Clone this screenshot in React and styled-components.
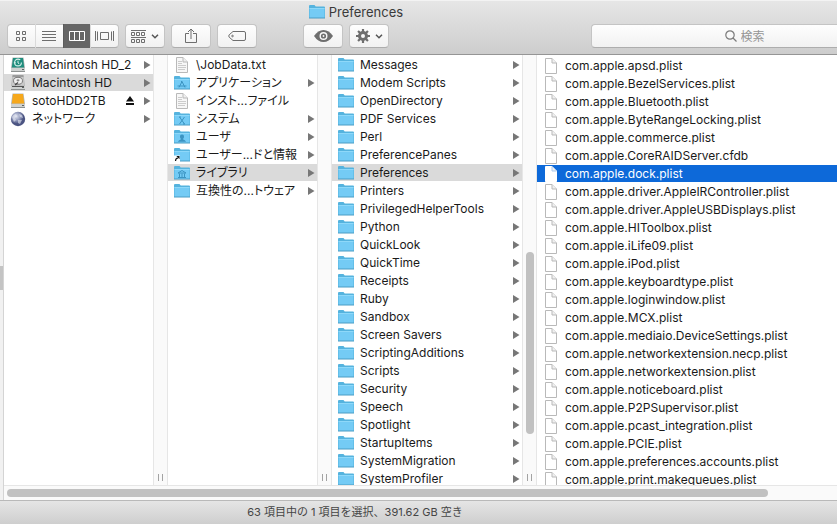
import React, { useState } from "react";
import styled, { createGlobalStyle, css } from "styled-components";

const GlobalStyle = createGlobalStyle`
  *, *::before, *::after { box-sizing: border-box; }
  html, body { margin: 0; }
  body, button, input {
    font-family: Inter, "Noto Sans CJK JP", sans-serif;
    font-size: 12px;
    color: #1a1a1a;
  }
  button { margin: 0; padding: 0; border: 0; background: none; cursor: default; }
  svg { display: block; flex: none; }
`;

const Window = styled.div`
  display: flex;
  flex-direction: column;
  height: 100vh;
  overflow: hidden;
  background: #fff;
`;

const Header = styled.header`
  flex: none;
  padding-left: 7px;
  padding-bottom: 6px;
  background: linear-gradient(#e6e6e6, #cdcdcd);
  border-top: 1px solid #f3f3f3;
  border-bottom: 1px solid #959595;
`;

const Title = styled.h1`
  display: flex;
  align-items: center;
  justify-content: center;
  gap: 4px;
  height: 21px;
  margin: 0 0 2px;
  padding-right: 132px;
  font-size: 13px;
  font-weight: 400;
  color: #3a3a3a;
`;

const Toolbar = styled.div`
  display: flex;
  gap: 6px;
`;

const face = css`
  height: 24px;
  background: linear-gradient(#fefefe, #f1f1f1);
  border: 1px solid #c4c4c4;
  border-bottom-color: #adadad;
  border-radius: 4px;
`;

const Segments = styled.div`
  ${face}
  display: flex;
  flex: none;
  width: 112px;
`;

const Segment = styled.button`
  display: flex;
  flex: 1;
  align-items: center;
  justify-content: center;
  height: 24px;
  margin-top: -1px;
  color: ${(p) => (p.$on ? "#fff" : "#6e6e6e")};
  background: ${(p) => (p.$on ? "#666" : "transparent")};
  &:not(:first-child) { border-left: 1px solid ${(p) => (p.$on ? "#5c5c5c" : "#dadada")}; }
`;

const ToolButton = styled.button`
  && { ${face} }
  display: flex;
  flex: none;
  align-items: center;
  justify-content: center;
  gap: 5px;
  width: 40px;
  color: #6e6e6e;
`;

const Spacer = styled.div`
  flex: 0 1 ${(p) => p.$size}px;
`;

const Search = styled.label`
  ${face}
  display: flex;
  flex: 1;
  align-items: center;
  justify-content: center;
  gap: 4px;
  padding-left: 64px;
  border-right: 0;
  border-radius: 4px 0 0 4px;
  color: #7b7b7b;
`;

const SearchInput = styled.input`
  width: 28px;
  padding: 0;
  border: 0;
  outline: 0;
  background: none;
  &::placeholder { color: #959595; opacity: 1; }
`;

const Browser = styled.div`
  display: flex;
  flex: 1;
  min-height: 0;
`;

const SidebarEdge = styled.div`
  display: flex;
  align-items: center;
  flex: none;
  width: 4px;
  background: #f1f1f1;
  border-right: 1px solid #d4d4d4;
`;

const SidebarThumb = styled.div`
  width: 3px;
  height: 24px;
  background: #c4c4c4;
`;

const ColumnArea = styled.main`
  display: flex;
  flex-direction: column;
  flex: 1;
  min-width: 0;
`;

const Columns = styled.div`
  display: flex;
  flex: 1;
  min-height: 0;
`;

const Column = styled.ul`
  flex: ${(p) => (p.$width ? `0 0 ${p.$width}px` : "1")};
  min-width: 0;
  margin: 0;
  padding: ${(p) => (p.$width ? 1 : 2)}px 0 0;
  overflow: hidden;
  list-style: none;
`;

const Item = styled.li`
  height: 18px;
`;

const Row = styled.button`
  display: flex;
  align-items: center;
  gap: 6px;
  width: 100%;
  height: 17px;
  padding: 0 2px 0 6px;
  text-align: left;
  color: ${(p) => (p.$tone === "active" ? "#fff" : "#1a1a1a")};
  background: ${(p) => ({ active: "#0d69d9", path: "#dadada" })[p.$tone] || "none"};
`;

const Name = styled.span`
  flex: 1;
  line-height: 17px;
  white-space: nowrap;
  font-feature-settings: "palt";
`;

const Gutter = styled.div`
  display: flex;
  flex-direction: column;
  align-items: center;
  flex: none;
  width: 15px;
  background: #fafafa;
  border: solid #e6e6e6;
  border-width: 0 1px;
`;

const Track = styled.div`
  display: flex;
  flex-direction: column;
  justify-content: flex-end;
  flex: 1;
  padding-bottom: 40px;
`;

const Thumb = styled.div`
  width: 8px;
  height: 48%;
  border-radius: 4px;
  background: #c1c1c1;
`;

const Grip = styled.div`
  flex: none;
  width: 5px;
  height: 7px;
  margin-bottom: 4px;
  border: solid #a3a3a3;
  border-width: 0 1px;
`;

const HorizontalTrack = styled.div`
  flex: none;
  height: 15px;
  padding: 3px;
  background: #fafafa;
  border-top: 1px solid #e6e6e6;
`;

const HorizontalThumb = styled.div`
  width: 92%;
  height: 8px;
  border-radius: 4px;
  background: #c1c1c1;
`;

const Status = styled.footer`
  flex: none;
  height: 24px;
  padding-right: 127px;
  background: linear-gradient(#e5e5e5, #cecece);
  border-top: 1px solid #b9b9b9;
  font-size: 11px;
  line-height: 23px;
  text-align: center;
  color: #454545;
`;

const folderMarks = {
  apps: <path d="M5 12.500 8 6.500l3 6M3.500 11h9M7 6l1 1" />,
  system: <path d="m5.500 6 5 7m0-7-5 7M5 6h2m2 7h2" />,
  users: (
    <path
      d="M8 5.500c1.300 0 2 .9 2 2.200 0 1-.5 1.800-1 2.300 0 1 2.500.8 3 2.800H4c.5-2 3-1.800 3-2.800-.5-.5-1-1.300-1-2.300 0-1.300.7-2.200 2-2.200Z"
      fill="#3c94c2"
      stroke="none"
    />
  ),
  library: <path d="m4 8 4-2.500L12 8ZM5.500 8.500v3.500m2.500-3.500v3.500m2.500-3.500v3.500M4 12.500h8" />,
};

function Folder({ mark }) {
  return (
    <svg width="16" height="16" viewBox="0 0 16 16" aria-hidden="true">
      <path d="M0 14V2q0-1 1-1h4.500l1.200 1.500H15q1 0 1 1V14Z" fill="#55b3de" />
      <path d="M.5 4H15.500V14H.5Z" fill="#74cbf5" />
      <path d="M.5 4.500h15" stroke="#8ed8f9" />
      <path d="M0 14h16" stroke="#4a9cc4" />
      <g fill="none" stroke="#3c94c2" strokeWidth="1">{folderMarks[mark]}</g>
      {mark === "alias" && (
        <>
          <path d="M0 8.500h6v6.500H0Z" fill="#fff" />
          <path d="M1.500 14c0-2 .5-2.800 2.500-3" fill="none" stroke="#111" strokeWidth="1.200" />
          <path d="M2.300 9H5.500v3.200Z" fill="#111" />
        </>
      )}
    </svg>
  );
}

function Doc({ lines, active }) {
  return (
    <svg width="16" height="16" viewBox="0 0 16 16" aria-hidden="true">
      <path d="M2.500.5h6.500l4.500 4.500v10.500H2.500Z" fill={lines ? "#f7f7f7" : "#fff"} stroke={active ? "#fff" : "#b9b9b9"} />
      <path d="M9 .5V5h4.500" fill="#f0f0f0" stroke={active ? "#a9c8ee" : "#b9b9b9"} />
      {lines && <path d="M4 4.500h4M4 6.500h4M4 8.500h8M4 10.500h8M4 12.500h7" stroke="#cccccc" />}
    </svg>
  );
}

function Drive({ kind }) {
  const top = { backup: "#1f8d7d", internal: "#c9c9c9", external: "#f6a81c" }[kind];
  return (
    <svg width="16" height="16" viewBox="0 0 16 16" aria-hidden="true">
      <path d="M2.500.5h11L15 10.500v4q0 .5-.5.5h-13Q1 15 1 14.500v-4Z" fill="#b6b9b8" />
      <path d="M3 1h10l1.200 9.500H1.800Z" fill={top} />
      <path d="M1 11h14v4H1Z" fill="#cfd2d1" />
      <path d="M1 14.500h14" stroke="#8d9190" />
      <path d="M12 12.500h2" stroke="#5f6362" />
      {kind === "backup" && (
        <>
          <circle cx="8" cy="5.500" r="3.400" fill="none" stroke="#d8f0ec" strokeWidth="1.100" strokeDasharray="18 3.400" />
          <path d="M8 3.700V6l1.300.8M3.800 5.800h2" fill="none" stroke="#d8f0ec" />
        </>
      )}
      {kind === "internal" && (
        <>
          <path d="M2.500 1h11" stroke="#6f6f6f" />
          <ellipse cx="8" cy="5.800" rx="4.500" ry="3.500" fill="#efefef" stroke="#7a7a7a" />
          <ellipse cx="8" cy="5.300" rx="1.500" ry="1.100" fill="#8a8a8a" />
          <path d="m5 10 3-2.500" stroke="#444" strokeWidth="1.100" />
          <path d="M2 11.500h12" stroke="#555" />
        </>
      )}
    </svg>
  );
}

function Globe() {
  return (
    <svg width="16" height="16" viewBox="0 0 16 16" aria-hidden="true">
      <defs>
        <radialGradient id="globe" cx="38%" cy="32%">
          <stop offset="0" stopColor="#dde1ee" />
          <stop offset=".6" stopColor="#8d95b8" />
          <stop offset="1" stopColor="#4b5482" />
        </radialGradient>
      </defs>
      <circle cx="8" cy="8" r="7.200" fill="url(#globe)" />
      <path d="M2 6c1-2 3-3 4-3l1 2-2 2 1 2-2 2ZM9 3l3 1 1 3-3-1ZM8 9l4 0-2 4-2-1Z" fill="#e6e9f3" opacity=".6" />
    </svg>
  );
}

const Arrow = () => (
  <svg width="7" height="8" viewBox="0 0 7 8" aria-hidden="true">
    <path d="M0 0 6.500 4 0 8Z" fill="#777" />
  </svg>
);

const Eject = () => (
  <svg width="12" height="9" viewBox="0 0 12 9" aria-hidden="true">
    <path d="M0 5.500 4 0l4 5.500ZM0 7h8v2H0Z" fill="#111" />
  </svg>
);

const Chevron = () => (
  <svg width="8" height="5" viewBox="0 0 8 5" fill="none" stroke="#555" strokeWidth="1.500" aria-hidden="true">
    <path d="m1 .7 3 3 3-3" />
  </svg>
);

const viewIcons = {
  icons: (
    <svg width="11" height="11" viewBox="0 0 11 11" fill="none" stroke="currentColor">
      <path d="M.5.500h3v3h-3ZM6.500.500h3v3h-3ZM.5 6.500h3v3h-3ZM6.500 6.500h3v3h-3Z" />
    </svg>
  ),
  list: (
    <svg width="14" height="10" viewBox="0 0 14 10" stroke="currentColor">
      <path d="M0 .5h14M0 3.500h14M0 6.500h14M0 9.500h14" />
    </svg>
  ),
  columns: (
    <svg width="16" height="10" viewBox="0 0 16 10" fill="none" stroke="currentColor">
      <path d="M.5.500h15v9H.5ZM5.500.500v9M10.500.500v9" />
    </svg>
  ),
  flow: (
    <svg width="19" height="10" viewBox="0 0 19 10" fill="none" stroke="currentColor">
      <path d="M.5 0v10M2.500 .5v9M5.500 1.500h8v7h-8ZM16.500 .5v9M18.500 0v10" />
    </svg>
  ),
};

const views = [
  ["icons", "アイコン"],
  ["list", "リスト"],
  ["columns", "カラム"],
  ["flow", "Cover Flow"],
];

const ArrangeIcon = () => (
  <svg width="15" height="13" viewBox="0 0 15 13" fill="none" stroke="currentColor" aria-hidden="true">
    <path d="M0 .5h15M.5 2.500h3v3h-3ZM5.500 2.500h3v3h-3ZM10.500 2.500h3v3h-3ZM0 7.500h15M.5 9.500h3v3h-3ZM5.500 9.500h3v3h-3ZM10.500 9.500h3v3h-3Z" />
  </svg>
);

const ShareIcon = () => (
  <svg width="12" height="16" viewBox="0 0 12 16" fill="none" stroke="currentColor" aria-hidden="true">
    <path d="M4 5.500H.5v9h11v-9H8M6 11V1M3 4l3-3 3 3" />
  </svg>
);

const TagIcon = () => (
  <svg width="18" height="10" viewBox="0 0 18 10" fill="none" stroke="currentColor" aria-hidden="true">
    <path d="M5 .5h11q1.500 0 1.500 1.500v6q0 1.500-1.500 1.500H5L1.200 6.200Q.3 5 1.200 3.800Z" />
    <circle cx="4.500" cy="5" r=".8" />
  </svg>
);

const EyeIcon = () => (
  <svg width="19" height="12" viewBox="0 0 19 12" aria-hidden="true">
    <path d="M0 6Q4 0 9.500 0T19 6Q15 12 9.500 12T0 6Z" fill="currentColor" />
    <circle cx="9.500" cy="6" r="3.300" fill="none" stroke="#f7f7f7" strokeWidth="1.400" />
    <circle cx="9.500" cy="6" r=".9" fill="#f7f7f7" />
  </svg>
);

const GearIcon = () => (
  <svg width="14" height="14" viewBox="0 0 14 14" fill="none" stroke="currentColor" aria-hidden="true">
    <circle cx="7" cy="7" r="3.500" strokeWidth="3" />
    <path d="M7 0v3M7 11v3M0 7h3M11 7h3M2.050 2.050l2 2M9.950 9.950l2 2M2.050 11.950l2-2M9.950 4.050l2-2" strokeWidth="2.200" />
  </svg>
);

const SearchIcon = () => (
  <svg width="12" height="12" viewBox="0 0 12 12" fill="none" stroke="currentColor" strokeWidth="1.200" aria-hidden="true">
    <circle cx="5" cy="5" r="4.200" />
    <path d="m8 8 3.500 3.500" />
  </svg>
);

const volumes = [
  { name: "Machintosh HD_2", icon: <Drive kind="backup" />, arrow: true },
  { name: "Macintosh HD", icon: <Drive kind="internal" />, arrow: true },
  { name: "sotoHDD2TB", icon: <Drive kind="external" />, arrow: true, eject: true },
  { name: "ネットワーク", icon: <Globe />, arrow: true },
];

const rootItems = [
  { name: "\\JobData.txt", icon: <Doc lines /> },
  { name: "アプリケーション", icon: <Folder mark="apps" />, arrow: true },
  { name: "インスト...ファイル", icon: <Doc lines /> },
  { name: "システム", icon: <Folder mark="system" />, arrow: true },
  { name: "ユーザ", icon: <Folder mark="users" />, arrow: true },
  { name: "ユーザー...ドと情報", icon: <Folder mark="alias" />, arrow: true },
  { name: "ライブラリ", icon: <Folder mark="library" />, arrow: true },
  { name: "互換性の...トウェア", icon: <Folder />, arrow: true },
];

const libraryItems = [
  "Messages", "Modem Scripts", "OpenDirectory", "PDF Services", "Perl", "PreferencePanes",
  "Preferences", "Printers", "PrivilegedHelperTools", "Python", "QuickLook", "QuickTime",
  "Receipts", "Ruby", "Sandbox", "Screen Savers", "ScriptingAdditions", "Scripts", "Security",
  "Speech", "Spotlight", "StartupItems", "SystemMigration", "SystemProfiler",
].map((name) => ({ name, icon: <Folder />, arrow: true }));

const preferenceFiles = [
  "apsd.plist", "BezelServices.plist", "Bluetooth.plist", "ByteRangeLocking.plist",
  "commerce.plist", "CoreRAIDServer.cfdb", "dock.plist", "driver.AppleIRController.plist",
  "driver.AppleUSBDisplays.plist", "HIToolbox.plist", "iLife09.plist", "iPod.plist",
  "keyboardtype.plist", "loginwindow.plist", "MCX.plist", "mediaio.DeviceSettings.plist",
  "networkextension.necp.plist", "networkextension.plist", "noticeboard.plist",
  "P2PSupervisor.plist", "pcast_integration.plist", "PCIE.plist",
  "preferences.accounts.plist", "print.makequeues.plist",
].map((name) => ({ name: `com.apple.${name}` }));

function FileColumn({ items, width, initial, tone = "path", label }) {
  const [selected, setSelected] = useState(initial);
  return (
    <Column $width={width} aria-label={label}>
      {items.map((item) => {
        const on = item.name === selected;
        return (
          <Item key={item.name}>
            <Row $tone={on ? tone : undefined} aria-pressed={on} onClick={() => setSelected(item.name)}>
              {item.icon || <Doc active={on} />}
              <Name>{item.name}</Name>
              {item.eject && <Eject />}
              {item.arrow && <Arrow />}
            </Row>
          </Item>
        );
      })}
    </Column>
  );
}

const ColumnGutter = ({ thumb }) => (
  <Gutter>
    <Track>{thumb && <Thumb />}</Track>
    <Grip />
  </Gutter>
);

export default function App() {
  const [view, setView] = useState("columns");
  return (
    <Window>
      <GlobalStyle />
      <Header>
        <Title>
          <Folder />
          Preferences
        </Title>
        <Toolbar>
          <Segments role="group" aria-label="表示">
            {views.map(([id, label]) => (
              <Segment key={id} $on={view === id} aria-pressed={view === id} aria-label={label} onClick={() => setView(id)}>
                {viewIcons[id]}
              </Segment>
            ))}
          </Segments>
          <ToolButton aria-label="並び順"><ArrangeIcon /><Chevron /></ToolButton>
          <ToolButton aria-label="共有"><ShareIcon /></ToolButton>
          <ToolButton aria-label="タグ"><TagIcon /></ToolButton>
          <Spacer $size={34} />
          <ToolButton aria-label="クイックルック"><EyeIcon /></ToolButton>
          <ToolButton aria-label="アクション"><GearIcon /><Chevron /></ToolButton>
          <Spacer $size={190} />
          <Search>
            <SearchIcon />
            <SearchInput type="text" aria-label="検索" placeholder="検索" />
          </Search>
        </Toolbar>
      </Header>
      <Browser>
        <SidebarEdge><SidebarThumb /></SidebarEdge>
        <ColumnArea>
          <Columns>
            <FileColumn label="ボリューム" items={volumes} width={149} initial="Macintosh HD" />
            <ColumnGutter />
            <FileColumn label="Macintosh HD" items={rootItems} width={149} initial="ライブラリ" />
            <ColumnGutter />
            <FileColumn label="ライブラリ" items={libraryItems} width={190} initial="Preferences" />
            <ColumnGutter thumb />
            <FileColumn label="Preferences" items={preferenceFiles} initial="com.apple.dock.plist" tone="active" />
          </Columns>
          <HorizontalTrack><HorizontalThumb /></HorizontalTrack>
        </ColumnArea>
      </Browser>
      <Status>63 項目中の 1 項目を選択、391.62 GB 空き</Status>
    </Window>
  );
}
